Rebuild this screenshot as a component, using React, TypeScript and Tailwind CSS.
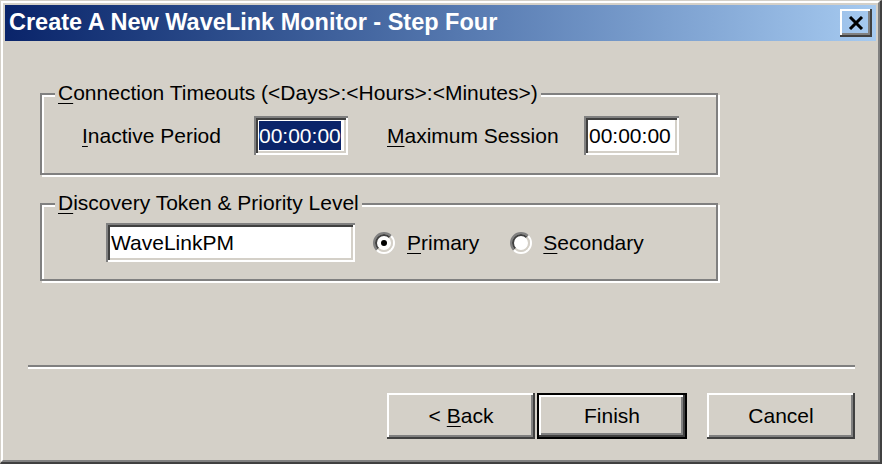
import React from "react";

const FONT = "font-['Liberation_Sans',Arial,sans-serif]";
const RAISED =
  "shadow-[inset_-2px_-2px_0_#404040,inset_2px_2px_0_#ffffff,inset_-4px_-4px_0_#808080]";
const SUNKEN =
  "bg-white shadow-[inset_2px_2px_0_#808080,inset_-2px_-2px_0_#ffffff,inset_4px_4px_0_#404040,inset_-4px_-4px_0_#d4d0c8]";
const ETCHED = "border-2 border-[#808080] shadow-[inset_2px_2px_0_#ffffff,2px_2px_0_#ffffff]";

function Mn({ children }: { children: React.ReactNode }) {
  return <span className="underline decoration-1 underline-offset-[3px]">{children}</span>;
}

function GroupBox({
  legend,
  className,
  children,
}: {
  legend: React.ReactNode;
  className: string;
  children: React.ReactNode;
}) {
  return (
    <div className={`relative ${ETCHED} ${className}`}>
      <span className="absolute -top-[14px] left-[13px] bg-[#d4d0c8] px-[3px] leading-[24px]">
        {legend}
      </span>
      {children}
    </div>
  );
}

function Radio({ checked }: { checked?: boolean }) {
  const r1 = 10;
  const r2 = 8;
  const c = 11;
  const k = Math.SQRT1_2;
  const arc = (r: number, tl: boolean) =>
    tl
      ? `M ${c - r * k} ${c + r * k} A ${r} ${r} 0 0 1 ${c + r * k} ${c - r * k}`
      : `M ${c + r * k} ${c - r * k} A ${r} ${r} 0 0 1 ${c - r * k} ${c + r * k}`;
  return (
    <svg width="22" height="22" viewBox="0 0 22 22" className="shrink-0">
      <circle cx={c} cy={c} r="7.5" fill="#ffffff" />
      <path d={arc(r1, true)} stroke="#808080" strokeWidth="2" fill="none" />
      <path d={arc(r1, false)} stroke="#ffffff" strokeWidth="2" fill="none" />
      <path d={arc(r2, true)} stroke="#404040" strokeWidth="2" fill="none" />
      <path d={arc(r2, false)} stroke="#d4d0c8" strokeWidth="2" fill="none" />
      {checked ? <circle cx={c} cy={c} r="3" fill="#000000" /> : null}
    </svg>
  );
}

function Button({ children, isDefault }: { children: React.ReactNode; isDefault?: boolean }) {
  if (isDefault) {
    return (
      <div className="h-[46px] w-[150px] border-2 border-black">
        <div className={`flex h-full w-full items-center justify-center ${RAISED}`}>{children}</div>
      </div>
    );
  }
  return (
    <div className={`flex h-[46px] w-[148px] items-center justify-center ${RAISED}`}>
      {children}
    </div>
  );
}

export default function App() {
  return (
    <div
      className={`${FONT} flex h-[464px] w-[882px] flex-col border-t border-l border-[#d4d0c8] border-r-2 border-b-2 border-r-[#404040] border-b-[#404040] bg-[#d4d0c8] text-[21px] text-black`}
    >
      <div className="flex flex-1 flex-col border-2 border-t-white border-l-white border-r-[#808080] border-b-[#808080] p-[2px]">
        {/* title bar */}
        <div className="flex h-[36px] items-center justify-between bg-linear-to-r from-[#0a246a] to-[#a6caf0] pr-[4px] pl-[4px]">
          <span className="text-[23.5px] font-bold text-white">
            Create A New WaveLink Monitor - Step Four
          </span>
          <div className={`flex h-[28px] w-[32px] items-center justify-center ${RAISED}`}>
            <svg width="16" height="14" viewBox="0 0 16 14">
              <path d="M2 1 L14 13 M14 1 L2 13" stroke="#000" strokeWidth="3" />
            </svg>
          </div>
        </div>

        <div className="pl-[35px]">
          <GroupBox
            className="mt-[52px] h-[82px] w-[678px] pt-[21px]"
            legend={
              <>
                <Mn>C</Mn>onnection Timeouts (&lt;Days&gt;:&lt;Hours&gt;:&lt;Minutes&gt;)
              </>
            }
          >
            <div className="flex items-center">
              <span className="ml-[40px] w-[172px]">
                <Mn>I</Mn>nactive Period
              </span>
              <div className={`flex h-[39px] w-[94px] items-center overflow-hidden pl-[5px] ${SUNKEN}`}>
                <span className="bg-[#0a246a] leading-[29px] whitespace-nowrap text-white">00:00:00</span>
              </div>
              <span className="ml-[39px] w-[197px]">
                <Mn>M</Mn>aximum Session
              </span>
              <div className={`flex h-[39px] w-[95px] items-center overflow-hidden pl-[5px] ${SUNKEN}`}>
                <span className="whitespace-nowrap">00:00:00</span>
              </div>
            </div>
          </GroupBox>

          <GroupBox
            className="mt-[28px] h-[78px] w-[678px] pt-[18px]"
            legend={
              <>
                <Mn>D</Mn>iscovery Token &amp; Priority Level
              </>
            }
          >
            <div className="flex items-center">
              <div className={`ml-[64px] flex h-[39px] w-[249px] items-center pl-[5px] ${SUNKEN}`}>
                WaveLinkPM
              </div>
              <div className="ml-[18px] flex items-center gap-[12px]">
                <Radio checked />
                <span>
                  <Mn>P</Mn>rimary
                </span>
              </div>
              <div className="ml-[31px] flex items-center gap-[11px]">
                <Radio />
                <span>
                  <Mn>S</Mn>econdary
                </span>
              </div>
            </div>
          </GroupBox>
        </div>

        <div className="mt-[84px] mr-[21px] ml-[23px] h-[4px] border-t-2 border-b-2 border-t-[#808080] border-b-white" />

        <div className="mt-[24px] mr-[21px] flex items-center justify-end">
          <Button>
            &lt; <span className="ml-[6px]"><Mn>B</Mn>ack</span>
          </Button>
          <div className="ml-[2px]">
            <Button isDefault>Finish</Button>
          </div>
          <div className="ml-[20px]">
            <Button>Cancel</Button>
          </div>
        </div>
      </div>
    </div>
  );
}
